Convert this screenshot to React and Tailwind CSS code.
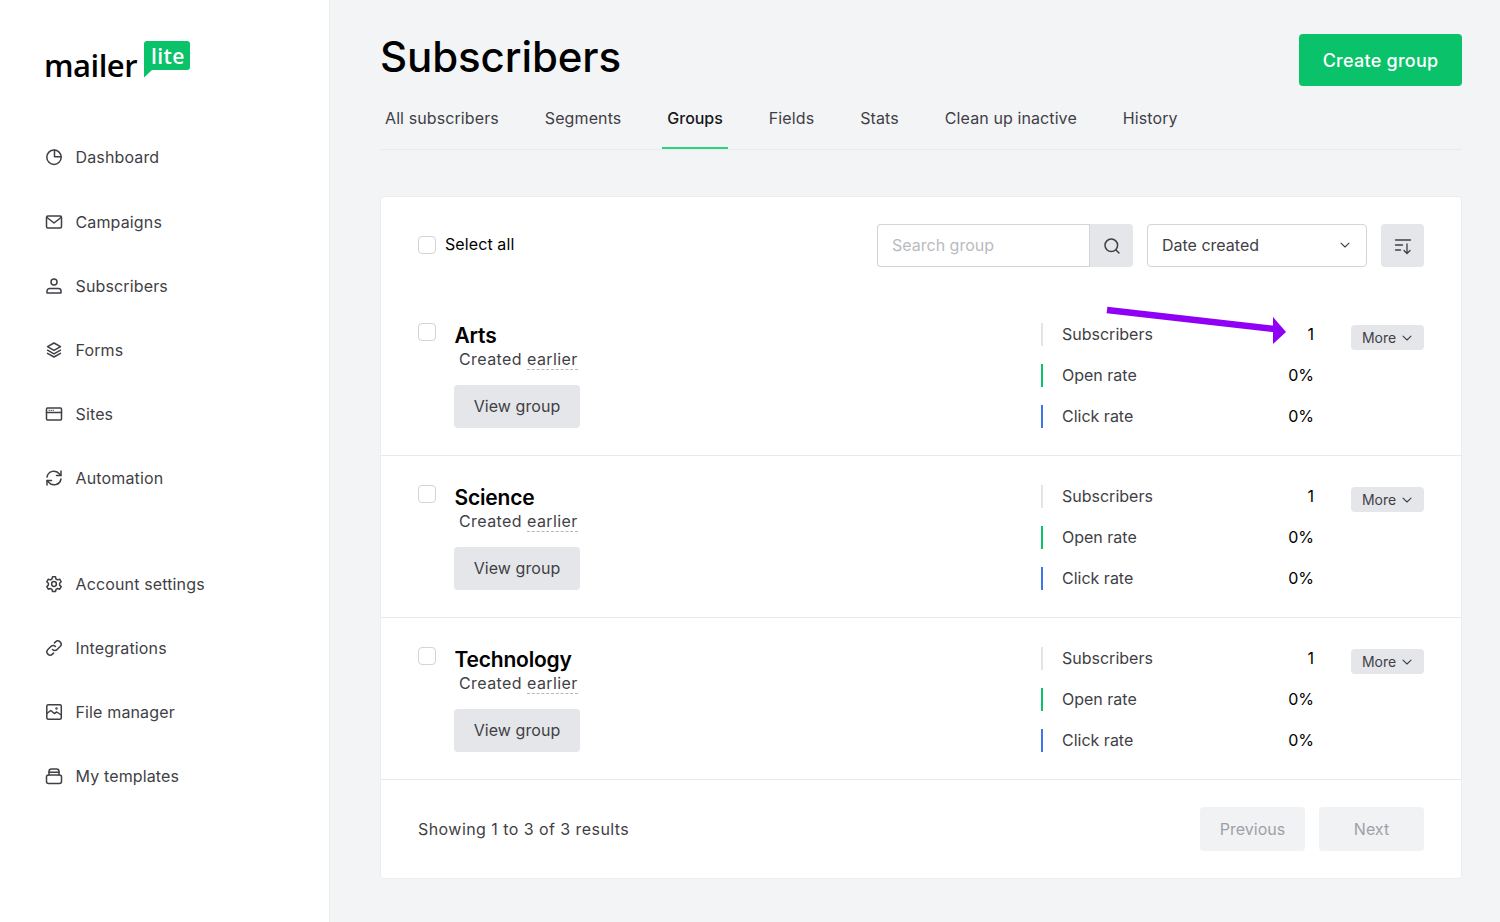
import React from "react";

const Svg = ({ children }) => (
  <svg width="18" height="18" viewBox="0 0 18 18" fill="none" stroke="#3f3f46" strokeWidth="1.5" strokeLinecap="round" strokeLinejoin="round" className="shrink-0">
    {children}
  </svg>
);

const icons = {
  dashboard: <Svg><circle cx="9" cy="9.200" r="7.200" /><path d="M9.500 2v6.700h6.700" /></Svg>,
  mail: <Svg><rect x="1.500" y="3" width="15" height="12" rx="1.500" /><path d="M2 4.500 9 10l7-5.500" /></Svg>,
  user: <Svg><circle cx="9" cy="5" r="3" /><path d="M2 16v-2a2.500 2.500 0 0 1 2.500-2.500h9A2.500 2.500 0 0 1 16 14v2z" /></Svg>,
  layers: <Svg><path d="m9 2 6.500 3.700L9 9.400 2.500 5.700z" /><path d="m2.500 9.200 6.500 3.700 6.500-3.700" /><path d="M2.500 12.400 9 16l6.500-3.600" /></Svg>,
  sites: <Svg><rect x="1.500" y="3" width="15" height="12" rx="1" /><path d="M1.500 7.500h15" /><path d="M4 5.300h.5M6 5.300h.5M8 5.300h.5" strokeWidth="1" /></Svg>,
  sync: <Svg><path d="M2 8a7 7 0 0 1 12.500-3L16 6.500" /><path d="M16 2v4.500h-4.500" /><path d="M16 10a7 7 0 0 1-12.500 3L2 11.500" /><path d="M2 16v-4.500h4.500" /></Svg>,
  gear: <Svg><circle cx="9" cy="9" r="2.400" /><path d="M7.500 1.800h3l.5 2.200 1.600.9 2.100-.7 1.500 2.600-1.600 1.500v1.800l1.600 1.500-1.500 2.600-2.100-.7-1.600.9-.5 2.200h-3l-.5-2.200-1.600-.9-2.100.7-1.500-2.600 1.600-1.500V8.300L1.800 6.800l1.500-2.600 2.100.7L7 4z" /></Svg>,
  link: <Svg><path d="M7.500 10.500a3.200 3.200 0 0 0 4.600 0l3-3a3.250 3.250 0 0 0-4.600-4.600l-1 1" /><path d="M10.500 7.500a3.200 3.200 0 0 0-4.600 0l-3 3a3.250 3.250 0 0 0 4.600 4.600l1-1" /></Svg>,
  image: <Svg><rect x="1.800" y="1.800" width="14.500" height="14.500" rx="1.500" /><path d="m1.800 10.500 4-3 3.500 3 2.500-1.500 4.500 3" /><circle cx="11.500" cy="5.500" r=".5" /></Svg>,
  template: <Svg><path d="M4 8V4.500a2.500 2.500 0 0 1 2.500-2.500h5A2.500 2.500 0 0 1 14 4.500V8" /><rect x="1.500" y="8" width="15" height="8.500" rx="2" /><path d="M4 5.200h10" /></Svg>,
};

const Chevron = ({ size = 12 }) => (
  <svg width={size} height={size} viewBox="0 0 12 12" fill="none" stroke="#3f3f46" strokeWidth="1.100" strokeLinecap="round" strokeLinejoin="round">
    <path d="m2 4.200 4 3.800 4-3.800" />
  </svg>
);

const NavItem = ({ icon, label, className = "" }) => (
  <div className={`flex items-center gap-[12.500px] h-[20px] text-[16px] tracking-[0.14px] text-[#3f3f46] ${className}`}>
    {icons[icon]}
    <span>{label}</span>
  </div>
);

const tabs = ["All subscribers", "Segments", "Groups", "Fields", "Stats", "Clean up inactive", "History"];

const Checkbox = ({ className = "" }) => (
  <div className={`w-[18px] h-[18px] rounded-[4px] border border-[#d4d4d8] bg-white shrink-0 ${className}`} />
);

const Metric = ({ bar, label, value }) => (
  <div className="flex items-center h-[24px]">
    <div className={`w-[2px] h-[23px] ${bar}`} />
    <span className="ml-[19px] w-[200px] text-[#3f3f46]">{label}</span>
    <span className="w-[52px] text-right text-black">{value}</span>
  </div>
);

const Row = ({ name, border }) => (
  <div className={`h-[162px] flex px-[37px] ${border ? "border-b border-[#e9eaec]" : ""}`}>
    <Checkbox className="mt-[29px]" />
    <div className="ml-[18px] flex-1">
      <div className="mt-[28px] ml-[0.500px] text-[21px] leading-[28px] font-semibold text-black tracking-[-0.2px]">{name}</div>
      <div className="-mt-[2px] ml-[5px] text-[16px] leading-[22px] tracking-[0.42px] text-[#3f3f46]">
        Created <span className="border-b border-dashed border-[#b5b5bb]">earlier</span>
      </div>
      <div className="mt-[15px] w-[126px] h-[43px] rounded-[4px] bg-[#e5e6e9] pb-[1px] flex items-center justify-center text-[16px] tracking-[0.05px] text-[#3f3f46]">View group</div>
    </div>
    <div className="mt-[28px] flex flex-col gap-[17px] text-[16px] h-fit">
      <Metric bar="bg-[#e4e4e7]" label="Subscribers" value="1" />
      <Metric bar="bg-[#09c269]" label="Open rate" value="0%" />
      <Metric bar="bg-[#3b76ee]" label="Click rate" value="0%" />
    </div>
    <div className="ml-[37px] mt-[31px] w-[73px] shrink-0 h-[25px] rounded-[4px] bg-[#e5e6e9] flex items-center justify-center gap-[5px] text-[14px] text-[#3f3f46]">
      More <Chevron />
    </div>
  </div>
);

export default function App() {
  return (
    <div className="flex min-h-[922px] bg-[#f3f4f6] font-['Inter',sans-serif] overflow-hidden">
      <aside className="w-[330px] shrink-0 bg-white border-r border-[#e9eaec] pl-[45px]">
        <div className="relative h-[147px]">
          <span className="absolute -left-[1px] top-[44px] text-[31px] leading-[42px] font-semibold text-black font-['Open_Sans',sans-serif] tracking-[-0.5px]">mailer</span>
          <svg className="absolute left-[99px] top-[41px]" width="46" height="37" viewBox="0 0 46 37">
            <path d="M3 0h40a3 3 0 0 1 3 3v23a3 3 0 0 1-3 3H8l-8 7.500V3a3 3 0 0 1 3-3z" fill="#09c269" />
          </svg>
          <span className="absolute left-[106px] top-[41px] text-[21px] leading-[30px] font-semibold text-white font-['Open_Sans',sans-serif] tracking-[0.4px]">lite</span>
        </div>
        <div className="flex flex-col gap-[44px]">
          <NavItem icon="dashboard" label="Dashboard" />
          <NavItem icon="mail" label="Campaigns" className="mt-[1px]" />
          <NavItem icon="user" label="Subscribers" />
          <NavItem icon="layers" label="Forms" />
          <NavItem icon="sites" label="Sites" />
          <NavItem icon="sync" label="Automation" />
          <NavItem icon="gear" label="Account settings" className="mt-[42px]" />
          <NavItem icon="link" label="Integrations" />
          <NavItem icon="image" label="File manager" />
          <NavItem icon="template" label="My templates" />
        </div>
      </aside>
      <main className="flex-1 pl-[50px] pr-[38px]">
        <div className="flex justify-between items-start pt-[34px]">
          <h1 className="text-[42px] leading-[46px] font-medium text-black tracking-[-0.1px]">Subscribers</h1>
          <div className="w-[163px] h-[52px] rounded-[4px] bg-[#09c269] flex items-center justify-center text-white text-[18px] tracking-[0.25px] font-medium">Create group</div>
        </div>
        <div className="flex mt-[4px] h-[60px] border-b border-[#e9eaec] text-[16px] tracking-[0.1px] text-[#3f3f46] gap-[36px]">
          {tabs.map((t) => (
            <div key={t} className={`px-[5px] pt-[16px] h-[59px] ${t === "Groups" ? "border-b-2 border-[#2dd27f] font-medium text-[#18181b] tracking-[-0.03px]" : ""}`}>{t}</div>
          ))}
        </div>
        <div className="mt-[46px] h-[683px] bg-white rounded-[4px] border border-[#eceded]">
          <div className="h-[97px] flex items-start px-[37px] pt-[27px]">
            <div className="flex items-center h-[40px] mt-[1px] gap-[9px] flex-1">
              <Checkbox />
              <span className="text-[16px] tracking-[0.1px] text-black -mt-[2px]">Select all</span>
            </div>
            <div className="w-[212px] h-[43px] border border-[#d4d4d8] border-r-0 rounded-l-[4px] px-[14px] pb-[1px] flex items-center text-[16px] text-[#b9bbc0]">Search group</div>
            <div className="w-[44px] h-[43px] bg-[#e5e6e9] rounded-r-[4px] flex items-center justify-center border-l border-[#d4d4d8]">
              <svg width="18" height="18" viewBox="0 0 18 18" fill="none" stroke="#3f3f46" strokeWidth="1.500" strokeLinecap="round"><circle cx="8.300" cy="8.300" r="6.300" /><path d="m13 13 3 3" /></svg>
            </div>
            <div className="ml-[14px] w-[220px] h-[43px] border border-[#d4d4d8] rounded-[4px] pl-[14px] pr-[15px] pb-[1px] flex items-center justify-between text-[16px] text-[#3f3f46]">
              Date created <Chevron />
            </div>
            <div className="ml-[14px] w-[43px] h-[43px] rounded-[4px] bg-[#e5e6e9] flex items-center justify-center">
              <svg width="18" height="18" viewBox="0 0 18 18" fill="none" stroke="#3f3f46" strokeWidth="1.300" strokeLinecap="round" strokeLinejoin="round"><path d="M1.500 3h15M1.500 8h7M1.500 13h5M13 7v9M10 13.500l3 3 3-3" /></svg>
            </div>
          </div>
          <Row name="Arts" border />
          <Row name="Science" border />
          <Row name="Technology" border />
          <div className="flex items-center justify-between px-[37px] pt-[27px]">
            <span className="text-[16px] text-[#3f3f46] tracking-[0.44px]">Showing 1 to 3 of 3 results</span>
            <div className="flex gap-[14px]">
              <div className="w-[105px] h-[44px] rounded-[4px] bg-[#f1f2f3] flex items-center justify-center text-[16px] text-[#9ea1a7]">Previous</div>
              <div className="w-[105px] h-[44px] rounded-[4px] bg-[#f1f2f3] flex items-center justify-center text-[16px] text-[#9ea1a7]">Next</div>
            </div>
          </div>
        </div>
      </main>
      <svg className="absolute left-[1105px] top-[305px]" width="185" height="42" viewBox="0 0 185 42">
        <path d="M2 5 L170 24" stroke="#8f00f5" strokeWidth="6.500" fill="none" />
        <path d="M168 12 L181 27 L168 39 Z" fill="#8f00f5" />
      </svg>
    </div>
  );
}
